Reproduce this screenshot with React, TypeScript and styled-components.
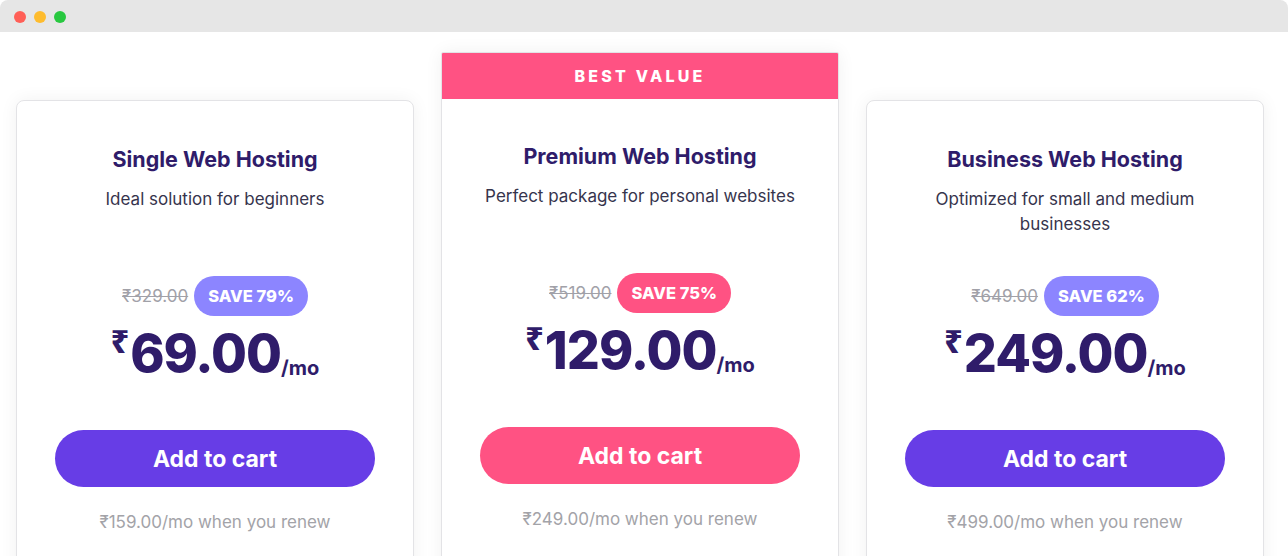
import React from "react";
import styled, { createGlobalStyle, css } from "styled-components";

const Global = createGlobalStyle`
  html, body { margin: 0; padding: 0; background: #ffffff; }
  body { font-family: "Inter", "Noto Sans", sans-serif; overflow: hidden; }
  * { box-sizing: border-box; }
`;

const Window = styled.div`
  width: 1288px;
  height: 556px;
  background: #ffffff;
  overflow: hidden;
  border-radius: 8px 8px 0 0;
  display: flex;
  flex-direction: column;
`;

const TitleBar = styled.div`
  height: 32px;
  flex: none;
  background: #e6e6e6;
  display: flex;
  align-items: center;
  gap: 8px;
  padding: 2px 0 0 14px;
`;

const Light = styled.span<{ $c: string }>`
  width: 12px;
  height: 12px;
  border-radius: 50%;
  background: ${(p) => p.$c};
`;

const Cards = styled.div`
  display: flex;
  align-items: flex-start;
  gap: 27px;
  padding: 20px 0 0 16px;
`;

const Card = styled.div<{ $featured?: boolean }>`
  width: 398px;
  flex: none;
  background: #fff;
  border: 1px solid #e3e3e6;
  border-radius: ${(p) => (p.$featured ? "2px" : "8px")};
  box-shadow: 0 0 18px rgba(0, 0, 0, 0.06);
  margin-top: ${(p) => (p.$featured ? "0" : "48px")};
  height: 560px;
  overflow: hidden;
`;

const Banner = styled.div`
  height: 46px;
  background: #ff5283;
  color: #fff;
  font-weight: 800;
  font-size: 16px;
  letter-spacing: 3.2px;
  display: flex;
  align-items: center;
  justify-content: center;
`;

const Body = styled.div<{ $featured?: boolean }>`
  display: flex;
  flex-direction: column;
  align-items: center;
  padding: ${(p) => (p.$featured ? "43px" : "44px")} 38px 0;
`;

const Title = styled.h3`
  margin: 0;
  font-size: 21.5px;
  line-height: 28px;
  font-weight: 700;
  color: #2f1c6a;
  white-space: nowrap;
`;

const Desc = styled.p`
  margin: 14px 0 0;
  font-size: 17px;
  line-height: 25px;
  color: #36344d;
  text-align: center;
  height: 64px;
`;

const SaveRow = styled.div`
  margin-top: 25px;
  display: flex;
  align-items: center;
  gap: 6px;
`;

const OldPrice = styled.span`
  font-size: 17px;
  color: #a1a1a8;
  text-decoration: line-through;
`;

const Badge = styled.span<{ $pink?: boolean }>`
  height: 40px;
  padding: 0 14px;
  border-radius: 20px;
  display: inline-flex;
  align-items: center;
  font-size: 16.5px;
  font-weight: 800;
  color: #fff;
  background: ${(p) => (p.$pink ? "#ff5283" : "#8c85ff")};
`;

const PriceRow = styled.div`
  margin-top: 6px;
  display: flex;
  align-items: flex-start;
  color: #2f1c6a;
  height: 70px;
`;

const Currency = styled.span`
  font-size: 32px;
  font-weight: 800;
  line-height: 1;
  margin-top: 3px;
  margin-right: 1px;
  font-family: "Noto Sans", sans-serif;
`;

const Amount = styled.span`
  font-size: 52px;
  font-weight: 800;
  line-height: 64px;
  letter-spacing: -1px;
`;

const Per = styled.span`
  font-size: 20px;
  font-weight: 700;
  align-self: flex-start;
  margin-top: 34px;
`;

const CartButton = styled.button<{ $pink?: boolean }>`
  margin-top: 38px;
  width: 100%;
  height: 57px;
  border: none;
  border-radius: 29px;
  color: #fff;
  font-family: inherit;
  font-size: 23px;
  font-weight: 700;
  cursor: pointer;
  ${(p) =>
    p.$pink
      ? css`background: #ff5283;`
      : css`background: #673de6;`}
`;

const Renew = styled.p`
  margin: 25px 0 0;
  font-size: 17px;
  color: #a3a3a8;
  white-space: nowrap;
`;

type Plan = {
  title: string;
  desc: string;
  old: string;
  save: string;
  price: string;
  renew: string;
  featured?: boolean;
};

const plans: Plan[] = [
  {
    title: "Single Web Hosting",
    desc: "Ideal solution for beginners",
    old: "₹329.00",
    save: "SAVE 79%",
    price: "69.00",
    renew: "₹159.00/mo when you renew",
  },
  {
    title: "Premium Web Hosting",
    desc: "Perfect package for personal websites",
    old: "₹519.00",
    save: "SAVE 75%",
    price: "129.00",
    renew: "₹249.00/mo when you renew",
    featured: true,
  },
  {
    title: "Business Web Hosting",
    desc: "Optimized for small and medium businesses",
    old: "₹649.00",
    save: "SAVE 62%",
    price: "249.00",
    renew: "₹499.00/mo when you renew",
  },
];

export default function App() {
  return (
    <>
      <Global />
      <Window>
        <TitleBar>
          <Light $c="#ff5f57" />
          <Light $c="#febc2e" />
          <Light $c="#28c840" />
        </TitleBar>
        <Cards>
          {plans.map((p) => (
            <Card key={p.title} $featured={p.featured}>
              {p.featured && <Banner>BEST VALUE</Banner>}
              <Body $featured={p.featured}>
                <Title>{p.title}</Title>
                <Desc>{p.desc}</Desc>
                <SaveRow>
                  <OldPrice>{p.old}</OldPrice>
                  <Badge $pink={p.featured}>{p.save}</Badge>
                </SaveRow>
                <PriceRow>
                  <Currency>₹</Currency>
                  <Amount>{p.price}</Amount>
                  <Per>/mo</Per>
                </PriceRow>
                <CartButton $pink={p.featured}>Add to cart</CartButton>
                <Renew>{p.renew}</Renew>
              </Body>
            </Card>
          ))}
        </Cards>
      </Window>
    </>
  );
}
